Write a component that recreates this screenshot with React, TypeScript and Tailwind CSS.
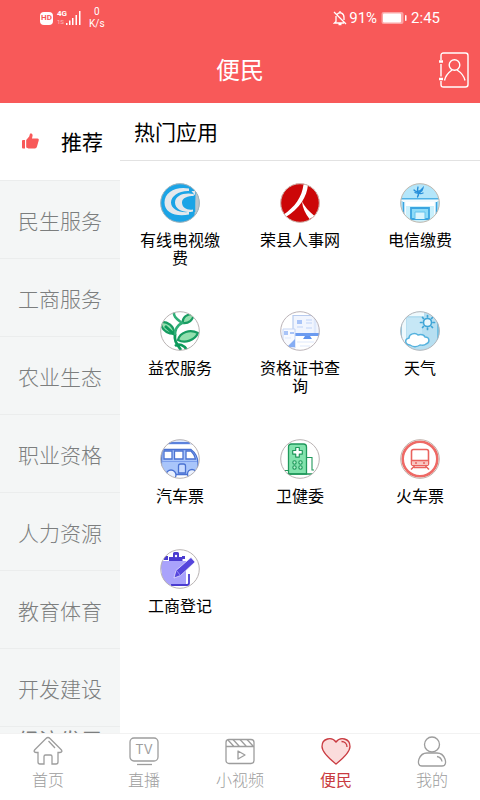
import React, { useState } from 'react';

const categories = ['推荐', '民生服务', '工商服务', '农业生态', '职业资格', '人力资源', '教育体育', '开发建设'];

interface IconFrameProps {
  id: string;
  ring?: string;
  bg?: string;
  children: React.ReactNode;
}

// Round 40px frame, artwork is clipped to the circle
const IconFrame: React.FC<IconFrameProps> = ({ id, ring = '#b9b3b3', bg = '#ffffff', children }) => (
  <svg viewBox="0 0 40 40" width="40" height="40" fill="none" aria-hidden="true">
    <clipPath id={id}>
      <circle cx="20" cy="20" r="19.5" />
    </clipPath>
    <g clipPath={`url(#${id})`}>
      <rect width="40" height="40" fill={bg} />
      {children}
    </g>
    <circle cx="20" cy="20" r="19.3" stroke={ring} strokeWidth="1" />
  </svg>
);

const CableIcon = () => (
  <IconFrame id="cable" bg="#1ba4e6" ring="#a9b4ba">
    <path d="M35.500 7c3 4 5 8 5 13s-2 10-6 14z" fill="#b9c6cd" />
    <path d="M29 5.500C16 3 4.500 9 4.500 19.500S16 34 29 31.500v-2.500C19 30 11 26 11 19.500S19 7.500 29 8z" fill="#e4e8ec" />
    <path d="M34 11c-10-2-19 1.500-19 8.500s9 11 18 9v-2c-6 1-11-2-11-7S28 13 34 13z" fill="#e4e8ec" />
    <path d="M30 4l4.500 5v20" stroke="#1ba4e6" strokeWidth="1.500" />
    <path d="M31.500 8l3.500 4.500V8z" fill="#e4e8ec" />
  </IconFrame>
);

const PeopleIcon = () => (
  <IconFrame id="people" bg="#cc0708" ring="#cfc0b8">
    <path d="M23.500 1.500H28c-1 12-8 24-23 33L3 32C15 24 22 14 23.500 1.500z" fill="#fff" />
    <path d="M22 18.500c3 5.500 7 10 12.500 14.500l-5 3c-4-5-7-11-7.500-17.500z" fill="#fff" />
  </IconFrame>
);

const TelecomIcon = () => (
  <IconFrame id="telecom" bg="#b4e6fa" ring="#c3b8ad">
    <path d="M0 15h40v25H0z" fill="#f4fbfe" />
    <path d="M0 15.800h40" stroke="#4fb2e6" strokeWidth="1.600" />
    <path d="M0 18h3v22H0zM37 18h3v22h-3z" fill="#b4e6fa" />
    <path d="M3.500 19v18M36.500 19v18" stroke="#3aa5e0" strokeWidth="1.600" />
    <path d="M6 22h28v18H6z" fill="#c9f0fc" />
    <path d="M6 19h28v4H6z" fill="#fff" />
    <path d="M11 36V25h18v11z" fill="#8edcf8" stroke="#3aa5e0" strokeWidth="1.800" />
    <path d="M15 36v-7h10v7" fill="#d9f5fd" stroke="#63c3ee" />
    <path d="M14 7c2 2.500 6 2 9-2-.5 4-5 6-8 4.500M18 4c-1.500 5 1 8 5 6" stroke="#278fda" strokeWidth="1.300" strokeLinecap="round" />
    <path d="M18 9c1 2 1 3-.5 5" stroke="#278fda" strokeWidth="1.300" strokeLinecap="round" />
  </IconFrame>
);

const PlantIcon = () => (
  <IconFrame id="plant">
    <path d="M0 11c8-1 14 4 14.500 12C7 23 2 19 0 11z" fill="#93dfae" stroke="#189c62" strokeWidth="2.200" />
    <path d="M22.500 12c0-6 4-9 11-9 0 6-5 10-11 9z" fill="#93dfae" stroke="#189c62" strokeWidth="2.200" />
    <path d="M18 29c2-8 12-11 20-7-3 7-13 11-20 7z" fill="#93dfae" stroke="#189c62" strokeWidth="2.200" />
    <path d="M5 15l10 9c-1 6 2 9 6 15" stroke="#0d9a5c" strokeWidth="2.800" />
    <path d="M14 0c-1 6 3 8 8 12-6 3-7 7-7 12" stroke="#2fae77" strokeWidth="2.600" />
    <path d="M15 35c4-3 9-1 12 4" stroke="#0d9a5c" strokeWidth="2.800" />
  </IconFrame>
);

const CertificateIcon = () => (
  <IconFrame id="certificate" ring="#bbb3b8">
    <path d="M13 4.500h27v20H13z" fill="#f1f5fe" stroke="#b8cbef" strokeWidth="1.200" />
    <path d="M14 22h26v3H14z" fill="#6c9bf0" />
    <path d="M17 9h5v4h-5z" fill="#a9c4f8" />
    <path d="M26 9h6M26 12h6M17 16h6M26 17h6" stroke="#cfdefa" strokeWidth="1.300" />
    <path d="M35 5v17" stroke="#dfe9fc" strokeWidth="2.500" />
    <path d="M25 25h5l2 3h-9z" fill="#5f93ef" />
    <path d="M3 18h12v19H3z" fill="#f8faff" stroke="#c5d5f5" />
    <path d="M4 20h4v4H4zM10 21h4v2h-4z" fill="#a9c4f8" />
    <path d="M7 36l8-8v8z" fill="#86adf4" />
    <path d="M5 27h6M17 31h17M20 35h10" stroke="#dfe9fc" />
  </IconFrame>
);

const WeatherIcon = () => (
  <IconFrame id="weather" bg="#b7dff1" ring="#b5b6ba">
    <path d="M0 0h6v40H0zM6 0h18v5H6z" fill="#eef9fd" />
    <path d="M37 0h3v40h-3z" fill="#6fc0e4" />
    <path d="M0 12h2v18H0z" fill="#8ccbe8" />
    <path d="M7 7h15v25H7z" fill="#c6e7f6" />
    <circle cx="27.500" cy="11.500" r="4" fill="#e8f7fd" stroke="#3da4d6" strokeWidth="1.600" />
    <path d="M27.500 4.500V6M27.500 17v1.500M20.500 11.500H22M33 11.500h1.500M22.500 6.500l1 1M31.500 15.500l1 1M32.500 6.500l-1 1M23.500 15.500l-1 1" stroke="#3da4d6" strokeWidth="1.700" strokeLinecap="round" />
    <path d="M10 34c-5 0-6-6-1-7 0-4 6-6 9-3 4-1 6 0 7 2 5 0 5 6 1 7-2 2-4 1-6 1-3 2-7 2-10 0z" fill="#fff" stroke="#55b2de" strokeWidth="1.500" />
  </IconFrame>
);

const BusIcon = () => (
  <IconFrame id="bus">
    <path d="M0 0h40v6H0z" fill="#dce8ff" />
    <path d="M8 4h21" stroke="#5c82dc" strokeWidth="2.200" strokeLinecap="round" />
    <path d="M2 10.500h29c4 3 7 8 7 14v11H1z" fill="#a9c5fa" stroke="#4a72d2" strokeWidth="1.300" />
    <path d="M4 12h8v8H4zM14.500 12H23v8h-8.500zM26 12h5c2 2 4 5 4.500 8H26z" fill="#fff" stroke="#4a72d2" strokeWidth="1.300" />
    <path d="M2 22.500h35" stroke="#7d9fec" />
    <path d="M18.500 34v-7q0-2 2-2h3q2 0 2 2v7z" fill="#c9dbff" stroke="#4a72d2" strokeWidth="1.300" />
    <circle cx="11" cy="36" r="5" fill="#eaf1ff" stroke="#4a72d2" strokeWidth="1.300" />
    <circle cx="32" cy="35" r="4.500" fill="#eaf1ff" stroke="#4a72d2" strokeWidth="1.300" />
  </IconFrame>
);

const HospitalIcon = () => (
  <IconFrame id="hospital">
    <path d="M8.500 35V8q0-3 3-3h12q3 0 3 3v27z" fill="#82e3ad" stroke="#20985b" strokeWidth="1.300" />
    <path d="M5 35h30" stroke="#20985b" strokeWidth="1.500" />
    <path d="M27 18.500h5V31h2M8 31.500H5" stroke="#20985b" strokeWidth="1.100" />
    <path d="M15.700 8.500h3.600v3h3v3.600h-3v3h-3.600v-3h-3v-3.600h3z" fill="#fff" stroke="#20985b" strokeWidth="1.200" strokeLinejoin="round" />
    <g fill="#b8f2d0" stroke="#20985b" strokeWidth="1.100">
      <circle cx="14.500" cy="23.500" r="1.700" />
      <circle cx="20.500" cy="23.500" r="1.700" />
      <circle cx="14.500" cy="28.500" r="1.700" />
      <circle cx="20.500" cy="28.500" r="1.700" />
    </g>
  </IconFrame>
);

const TrainIcon = () => (
  <IconFrame id="train" ring="#bfb0a9">
    <circle cx="20" cy="20" r="17.300" stroke="#ee6a66" strokeWidth="2.600" />
    <rect x="11.500" y="10.500" width="17" height="16" rx="2" stroke="#e9625e" strokeWidth="1.600" />
    <path d="M12 21.500h16v4.500H12z" fill="#f8c6c2" />
    <path d="M12 21.500h16" stroke="#e9625e" strokeWidth="1.300" />
    <circle cx="16" cy="24" r="1" fill="#e9625e" />
    <circle cx="24" cy="24" r="1" fill="#e9625e" />
    <path d="M14.500 27L11 30.500M25.500 27l3.500 3.500M14 28.500h12" stroke="#e9625e" strokeWidth="1.500" />
  </IconFrame>
);

const RegisterIcon = () => (
  <IconFrame id="register">
    <path d="M0 12h26v24H8q-3 0-5-3z" fill="#a9a2fb" />
    <path d="M4 7h4v4H4zM22 7h3v3h-3z" fill="#4a3bd0" />
    <path d="M9 12V8h4V4.500Q13 3 14.500 3h3Q19 3 19 4.500V8h3.500v4z" fill="#4a3bd0" />
    <circle cx="16" cy="7" r="1.200" fill="#fff" />
    <path d="M29 25v9q0 2-2 2H11" stroke="#4a3bd0" strokeWidth="1.800" />
    <path d="M14 29l2-7.500L31 8.500l4 4.500-14.500 13.500z" fill="#5646dc" stroke="#fff" strokeWidth=".6" />
    <path d="M16.500 21.500l4 5" stroke="#a9a2fb" strokeWidth=".8" />
  </IconFrame>
);

const apps = [
  { name: '有线电视缴费', icon: <CableIcon /> },
  { name: '荣县人事网', icon: <PeopleIcon /> },
  { name: '电信缴费', icon: <TelecomIcon /> },
  { name: '益农服务', icon: <PlantIcon /> },
  { name: '资格证书查询', icon: <CertificateIcon /> },
  { name: '天气', icon: <WeatherIcon /> },
  { name: '汽车票', icon: <BusIcon /> },
  { name: '卫健委', icon: <HospitalIcon /> },
  { name: '火车票', icon: <TrainIcon /> },
  { name: '工商登记', icon: <RegisterIcon /> },
];

const tabs = [
  {
    name: '首页',
    icon: (
      <path d="M15 1.500c-1 0-1.500.5-2 1L2 13.500c-1.500 1.500-1 3 1 3h2V26q0 2 2 2h4v-7.500q0-1.500 1.500-1.500h5q1.500 0 1.500 1.500V28h4q2 0 2-2v-9.500h2c2 0 2.500-1.500 1-3L17 2.500c-.5-.5-1-1-2-1zM15.500 5l6.500 7" />
    ),
  },
  {
    name: '直播',
    icon: (
      <>
        <rect x="1" y="2" width="28" height="23" rx="4" />
        <path d="M8 28.500h15" />
        <text x="15" y="18" textAnchor="middle" fill="currentColor" stroke="none" fontSize="13" fontWeight="400" fontFamily="Inter, sans-serif">TV</text>
      </>
    ),
  },
  {
    name: '小视频',
    icon: (
      <>
        <rect x="1" y="3.500" width="28" height="24" rx="3" />
        <path d="M1 10.500h28M3 4l6 6.500M8 3.500l6.500 7M15 3.500l6.500 7M22 3.500l6.500 7M13 15v8l7-4z" strokeLinejoin="round" />
      </>
    ),
  },
  {
    name: '便民',
    icon: (
      <>
        <path d="M15 28C10 24 1 17 1 10.500 1 2 11 .5 15 6c4-5.500 14-4 14 4.500C29 17 20 24 15 28z" fill="#fbdcdc" />
        <path d="M20.500 5.500c3 0 5.500 2 5.500 5.500" />
      </>
    ),
  },
  {
    name: '我的',
    icon: (
      <>
        <circle cx="15" cy="8.500" r="7.500" />
        <path d="M5 30h20c4 0 4-4 3-7-1.500-4-5-6-8-6H10c-3 0-6.500 2-8 6-1 3-1 7 3 7zM20 20.500c3 .5 4.500 2 5 5" />
      </>
    ),
  },
];

const StatusBar = () => (
  <div className="flex h-9 items-center justify-between px-10 font-[Roboto,sans-serif] leading-none">
    <div className="flex items-center">
      <span className="flex h-[13px] w-[13px] items-center justify-center rounded-sm bg-white text-[8px] font-bold text-[#f85959]">HD</span>
      <div className="ml-1 flex flex-col text-[8px] font-bold leading-[8px]">
        <span>4G</span>
        <span className="text-[6px] font-normal opacity-60">1S</span>
      </div>
      <svg viewBox="0 0 15 14" width="15" height="14" fill="currentColor" className="-ml-px" aria-hidden="true">
        <path d="M0 12h1.500v2H0zM3 9.500h1.500V14H3zM6 7h1.500v7H6zM9.500 4H11v10H9.500zM13 0h1.500v14H13z" />
      </svg>
      <div className="ml-2 text-center text-[10px] leading-3">
        <p>0</p>
        <p>K/s</p>
      </div>
    </div>
    <div className="flex items-center text-[15px]">
      <svg viewBox="0 0 14 16" width="14" height="16" fill="none" stroke="currentColor" strokeWidth="1.300" className="mr-0.5" aria-hidden="true">
        <path d="M1 2l12 12M7 1v1.500M4 4.500c3-3.500 7-1 7 3V10M3 6v5.500L1.500 13h9.500M5.500 14.500h3" />
      </svg>
      <span>91%</span>
      <svg viewBox="0 0 26 14" width="26" height="14" fill="currentColor" className="mx-1" aria-hidden="true">
        <rect x=".5" y="1" width="22" height="12" rx="2" opacity=".45" />
        <rect x="2" y="2.500" width="18" height="9" rx="1" />
        <rect x="24" y="4" width="1.500" height="6" rx=".7" />
      </svg>
      <span>2:45</span>
    </div>
  </div>
);

const App: React.FC = () => {
  const [category, setCategory] = useState('推荐');
  const [tab, setTab] = useState('便民');

  return (
    <div className="flex h-screen flex-col bg-white font-['Noto_Sans_CJK_SC',sans-serif] text-black">
      <header className="shrink-0 bg-[#f85959] text-white">
        <StatusBar />
        <div className="grid h-[67px] grid-cols-[1fr_auto_1fr] items-center px-2.5">
          <h1 className="col-start-2 pb-0.5 text-2xl leading-8">便民</h1>
          <button aria-label="通讯录" className="justify-self-end">
            <svg viewBox="0 0 32 36" width="32" height="36" fill="none" stroke="currentColor" strokeWidth="1.400">
              <path d="M3 8V3.500q0-2.500 2.500-2.500h22Q30 1 30 3.500v29q0 2.500-2.500 2.500h-22Q3 35 3 32.500V29M3 12v12.500" />
              <path d="M1 9.500h4M1 27h4" strokeWidth="2.600" />
              <circle cx="16.500" cy="13" r="5.300" />
              <path d="M6.500 28.500c1-5 4-8 7.500-10.500M19 18c4 2.500 7 5.500 8 10.500" />
            </svg>
          </button>
        </div>
      </header>

      <main className="flex min-h-0 flex-1">
        <nav className="w-1/4 shrink-0 overflow-hidden bg-[#f4f6f6]">
          {categories.map(name => (
            <button
              key={name}
              onClick={() => setCategory(name)}
              className={`flex h-[78px] w-full items-center border-b border-[#ebeded] text-[21px] leading-8 ${
                category === name ? 'justify-between bg-white pb-0.5 pl-[22px] pr-[17px] text-black' : 'justify-center font-light text-[#7c7e7e]'
              }`}
            >
              {name === '推荐' && (
                <svg viewBox="0 0 17 16" width="17" height="16" fill="#f85959" aria-hidden="true">
                  <path d="M0 8q0-1 1-1h2v8.500H1q-1 0-1-1zM4.200 7l3-3.500L8 .8C8.500 0 10.800.3 10.600 2.500L10 5.500h5.500c1.300 0 1.500 1 1.200 2l-1.700 6c-.4 1.300-1 2-2.200 2H6.500l-2.300-1z" />
                </svg>
              )}
              {name}
            </button>
          ))}
          <button className="flex h-[78px] w-full items-start justify-center pt-0.5 text-[21px] leading-5 text-[#7c7e7e]">经济发展</button>
        </nav>

        <section className="min-w-0 flex-1">
          <h2 className="border-b border-[#e2e2e2] px-3.5 pb-[13px] pt-3 text-[21px] leading-8">热门应用</h2>
          <div className="grid grid-cols-3 gap-y-[45px] pt-[22px]">
            {apps.map(app => (
              <a key={app.name} href="#" className="flex flex-col items-center gap-[7px]">
                {app.icon}
                <span className="w-20 text-center text-base leading-[18px]">{app.name}</span>
              </a>
            ))}
          </div>
        </section>
      </main>

      <footer className="grid h-[67px] shrink-0 grid-cols-5 border-t border-[#f2f2f2] bg-white">
        {tabs.map(item => (
          <button
            key={item.name}
            onClick={() => setTab(item.name)}
            className={`flex flex-col items-center pt-0.5 ${tab === item.name ? 'text-[#c93a40]' : 'font-light text-[#9d9d9d]'}`}
          >
            <svg viewBox="0 0 30 31" width="30" height="31" fill="none" stroke="currentColor" strokeWidth="1.300" aria-hidden="true">
              {item.icon}
            </svg>
            <span className="text-base leading-6">{item.name}</span>
          </button>
        ))}
      </footer>
    </div>
  );
};

export default App;
